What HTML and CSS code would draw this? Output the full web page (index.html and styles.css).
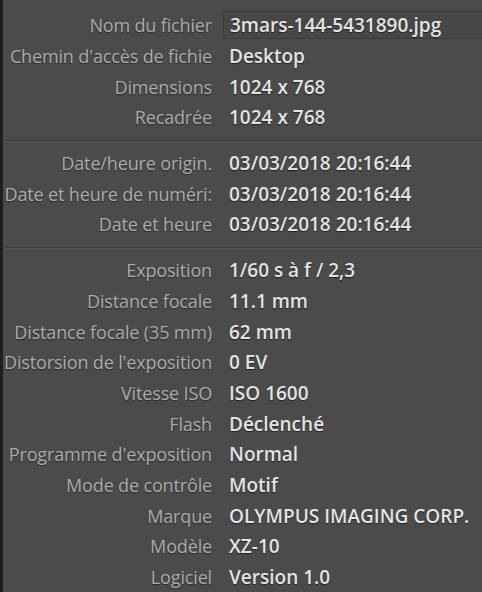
FILE: index.html
```html
<!DOCTYPE html>
<html lang="fr">
<head>
    <meta charset="UTF-8">
    <meta name="viewport" content="width=device-width, initial-scale=1.0">
    <title>Métadonnées</title>
    <link rel="stylesheet" href="styles.css">
</head>
<body>
    <div class="metadata-panel">
        <div class="meta-group first">
            <div class="meta-row">
                <span class="meta-label">Nom du fichier</span>
                <span class="meta-value editable">3mars-144-5431890.jpg</span>
            </div>
            <div class="meta-row">
                <span class="meta-label">Chemin d'accès de fichie</span>
                <span class="meta-value">Desktop</span>
            </div>
            <div class="meta-row">
                <span class="meta-label">Dimensions</span>
                <span class="meta-value">1024 x 768</span>
            </div>
            <div class="meta-row">
                <span class="meta-label">Recadrée</span>
                <span class="meta-value">1024 x 768</span>
            </div>
        </div>

        <div class="meta-group">
            <div class="meta-row">
                <span class="meta-label">Date/heure origin.</span>
                <span class="meta-value">03/03/2018 20:16:44</span>
            </div>
            <div class="meta-row">
                <span class="meta-label">Date et heure de numéri:</span>
                <span class="meta-value">03/03/2018 20:16:44</span>
            </div>
            <div class="meta-row">
                <span class="meta-label">Date et heure</span>
                <span class="meta-value">03/03/2018 20:16:44</span>
            </div>
        </div>

        <div class="meta-group">
            <div class="meta-row">
                <span class="meta-label">Exposition</span>
                <span class="meta-value">1/60 s à f / 2,3</span>
            </div>
            <div class="meta-row">
                <span class="meta-label">Distance focale</span>
                <span class="meta-value">11.1 mm</span>
            </div>
            <div class="meta-row">
                <span class="meta-label">Distance focale (35 mm)</span>
                <span class="meta-value">62 mm</span>
            </div>
            <div class="meta-row">
                <span class="meta-label">Distorsion de l'exposition</span>
                <span class="meta-value">0 EV</span>
            </div>
            <div class="meta-row">
                <span class="meta-label">Vitesse ISO</span>
                <span class="meta-value">ISO 1600</span>
            </div>
            <div class="meta-row">
                <span class="meta-label">Flash</span>
                <span class="meta-value">Déclenché</span>
            </div>
            <div class="meta-row">
                <span class="meta-label">Programme d'exposition</span>
                <span class="meta-value">Normal</span>
            </div>
            <div class="meta-row">
                <span class="meta-label">Mode de contrôle</span>
                <span class="meta-value">Motif</span>
            </div>
            <div class="meta-row">
                <span class="meta-label">Marque</span>
                <span class="meta-value">OLYMPUS IMAGING CORP.</span>
            </div>
            <div class="meta-row">
                <span class="meta-label">Modèle</span>
                <span class="meta-value">XZ-10</span>
            </div>
            <div class="meta-row">
                <span class="meta-label">Logiciel</span>
                <span class="meta-value">Version 1.0</span>
            </div>
        </div>
    </div>
</body>
</html>
```

FILE: styles.css
```css
* {
    margin: 0;
    padding: 0;
    box-sizing: border-box;
}

html, body {
    height: 100%;
    overflow: hidden;
}

body {
    font-family: "Open Sans", "Liberation Sans", sans-serif;
    background: #4b4b4b;
}

.metadata-panel {
    min-height: 100%;
    background: #4b4b4b;
    border-left: 3px solid #1f1f1f;
    padding-left: 1px;
}

.meta-group {
    padding: 7px 0 7px;
    border-top: 1px solid #3a3a3a;
    box-shadow: inset 0 1px 0 #575757;
}

.meta-group.first {
    padding-top: 10px;
    border-top: none;
    box-shadow: none;
}

.meta-row {
    display: flex;
    align-items: center;
    height: 30.7px;
}

.meta-label {
    flex: 0 0 208px;
    overflow: hidden;
    white-space: nowrap;
    text-align: right;
    font-size: 18px;
    letter-spacing: -0.15px;
    color: #acacac;
    text-shadow: 0 1px 1px #2a2a2a;
}

.meta-value {
    margin-left: 11px;
    padding-left: 6px;
    white-space: nowrap;
    font-size: 19px;
    font-weight: 600;
    color: #e4e4e4;
    text-shadow: 0 1px 1px #222;
}

.meta-value.editable {
    flex: 1;
    height: 28px;
    line-height: 26px;
    margin-right: -4px;
    background: #474747;
    border: 1px solid #3b3b3b;
}
```
